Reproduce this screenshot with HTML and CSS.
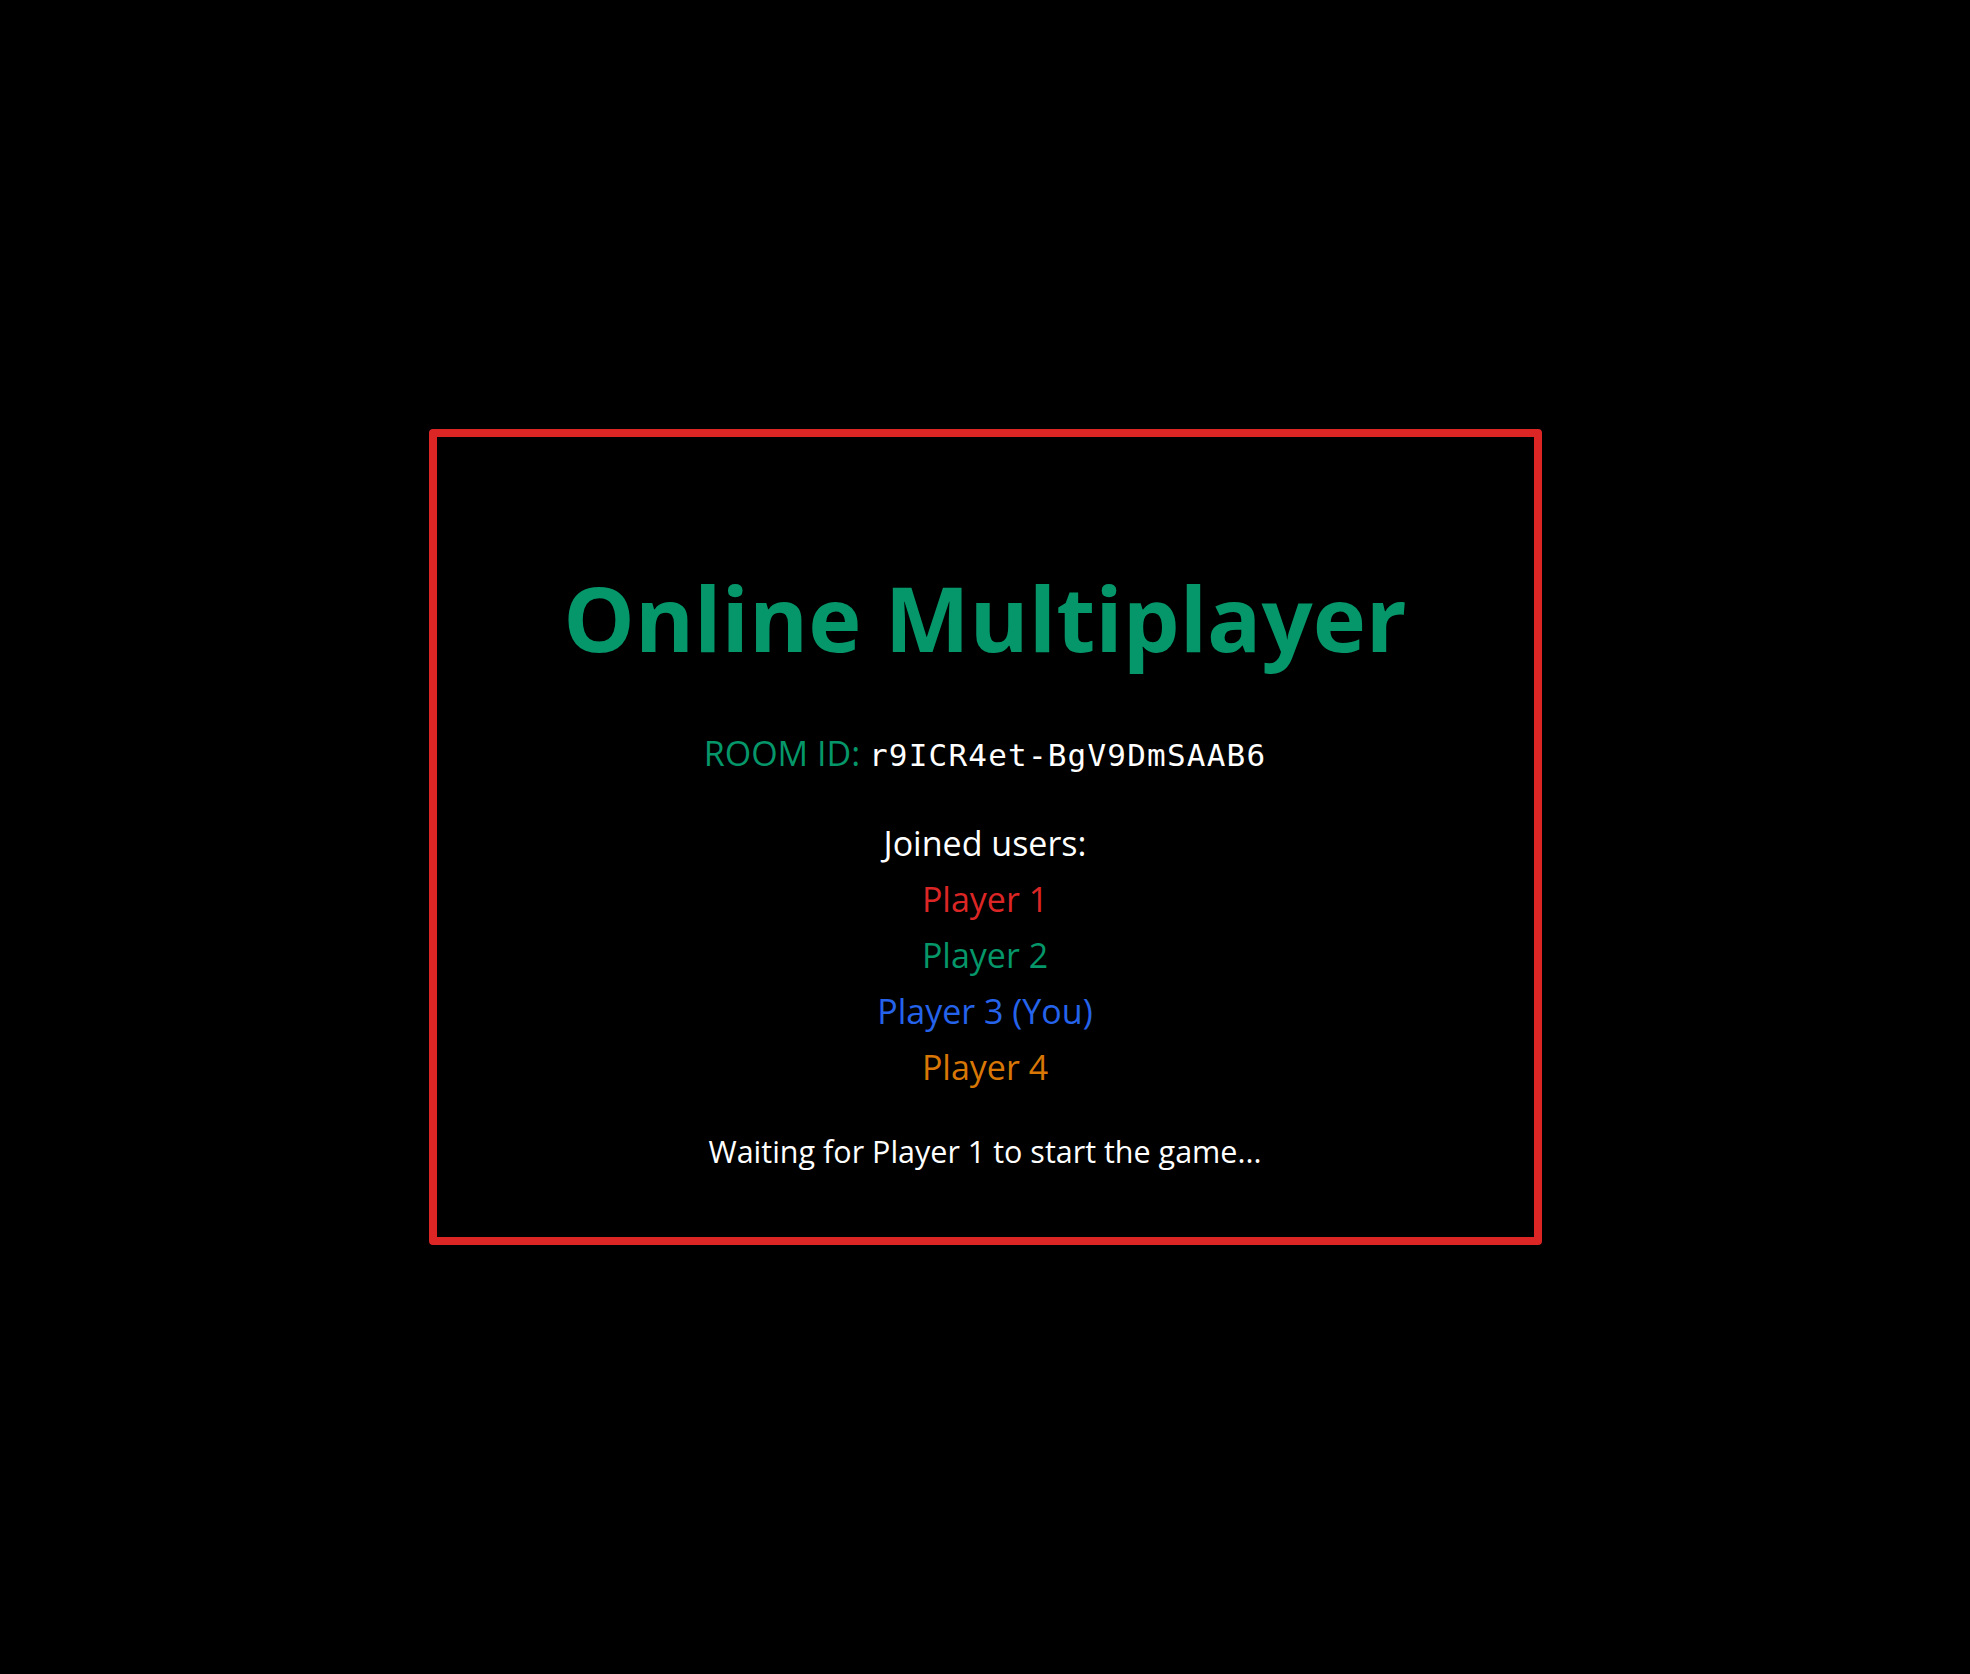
FILE: index.html
```html
<!DOCTYPE html>
<html lang="en">
<head>
<meta charset="utf-8">
<title>Online Multiplayer</title>
<link rel="stylesheet" href="styles.css">
</head>
<body>
<main class="lobby">
  <h1 class="title">Online Multiplayer</h1>
  <p class="room"><span class="room-label">ROOM ID:</span> <span class="room-id">r9ICR4et-BgV9DmSAAB6</span></p>
  <div class="users">
    <p class="users-heading">Joined users:</p>
    <ul class="user-list">
      <li class="player p1">Player 1</li>
      <li class="player p2">Player 2</li>
      <li class="player p3">Player 3 (You)</li>
      <li class="player p4">Player 4</li>
    </ul>
  </div>
  <p class="waiting">Waiting for Player 1 to start the game...</p>
</main>
</body>
</html>
```
FILE: styles.css
```css
html, body {
  margin: 0;
  padding: 0;
  background: #000;
}
body {
  min-height: 100vh;
  display: flex;
  align-items: center;
  justify-content: center;
  font-family: "Open Sans", "Noto Sans", sans-serif;
  color: #fff;
}
.lobby {
  box-sizing: border-box;
  width: 1113px;
  height: 816px;
  border: 8px solid #dc2626;
  border-radius: 4px;
  padding-top: 120px;
  display: flex;
  flex-direction: column;
  align-items: center;
  text-align: center;
}
.title {
  margin: 0;
  font-size: 90px;
  font-weight: 700;
  line-height: 120px;
  color: #059669;
}
.room {
  margin: 52px 0 0;
  font-size: 34px;
  line-height: 48px;
}
.room-label {
  color: #059669;
}
.room-id {
  font-family: "DejaVu Sans Mono", "Liberation Mono", monospace;
  font-size: 31px;
  letter-spacing: 1.2px;
  color: #fff;
}
.users {
  margin-top: 36px;
}
.users-heading {
  margin: 0;
  font-size: 34px;
  line-height: 56px;
}
.user-list {
  list-style: none;
  margin: 0;
  padding: 0;
}
.player {
  font-size: 34px;
  line-height: 56px;
}
.p1 { color: #dc2626; }
.p2 { color: #059669; }
.p3 { color: #2563eb; }
.p4 { color: #d97706; }
.waiting {
  margin: 28px 0 0;
  font-size: 30.5px;
  line-height: 56px;
}
```
